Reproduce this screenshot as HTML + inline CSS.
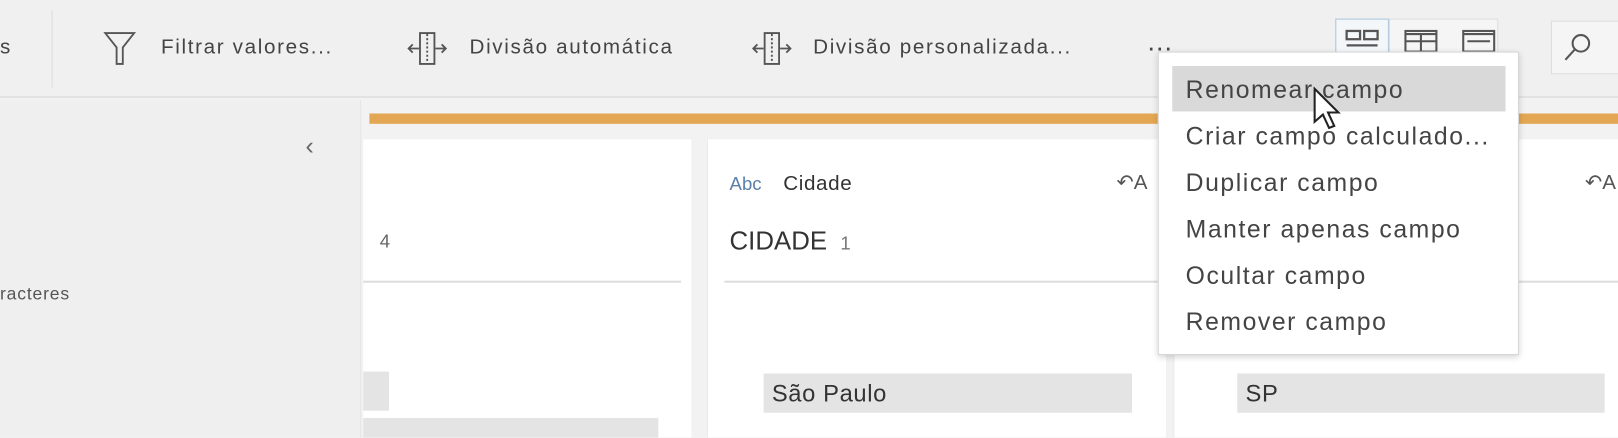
<!DOCTYPE html>
<html><head><meta charset="utf-8"><style>
*{margin:0;padding:0;box-sizing:border-box}
body{width:1618px;height:424px;overflow:hidden;background:#f2f2f2;font-family:"Liberation Sans",sans-serif;color:#333}
#w{position:relative;width:1568px;height:411px;transform:scale(1.0319);transform-origin:0 0}
.a{position:absolute;white-space:nowrap}
.tb{left:0;top:0;width:1568px;height:95px;background:#f0f0f0;border-bottom:2px solid #e2e2e2}
.tt{font-size:20px;color:#444;top:35px;letter-spacing:1.6px}
.card{background:#fff;top:135px;height:289px}
.chip{background:#e4e4e4;height:38px;font-size:23px;color:#333;padding:6px 8px;letter-spacing:0.6px}
.menu{left:1122px;top:50px;width:350px;height:294px;background:#fff;border:1px solid #d6d6d6;box-shadow:0 2px 6px rgba(0,0,0,.18)}
.mi{position:absolute;left:26px;font-size:24px;color:#444;letter-spacing:1.5px}
</style></head><body><div id="w">
<div class="a tb"></div>
<div class="a tt" style="left:0">s</div>
<div class="a" style="left:50px;top:10px;width:1px;height:75px;background:#ddd"></div>
<svg class="a" style="left:100px;top:30px" width="32" height="34" viewBox="0 0 32 34"><path d="M2 2H30L19 16V32H13V16Z" fill="none" stroke="#555" stroke-width="1.8"/></svg>
<div class="a tt" style="left:156px">Filtrar valores...</div>
<svg class="a" style="left:394px;top:30px" width="40" height="34" viewBox="0 0 40 34"><g fill="none" stroke="#555" stroke-width="1.8"><path d="M13 4V2H27V4M13 30V32H27V30M13 4V30M27 4V30"/><path d="M20 3V31" stroke-dasharray="2 2"/><path d="M12 17H2M6 13L2 17L6 21M28 17H38M34 13L38 17L34 21"/></g></svg>
<div class="a tt" style="left:455px">Divisão automática</div>
<svg class="a" style="left:728px;top:30px" width="40" height="34" viewBox="0 0 40 34"><g fill="none" stroke="#555" stroke-width="1.8"><path d="M13 4V2H27V4M13 30V32H27V30M13 4V30M27 4V30"/><path d="M20 3V31" stroke-dasharray="2 2"/><path d="M12 17H2M6 13L2 17L6 21M28 17H38M34 13L38 17L34 21"/></g></svg>
<div class="a tt" style="left:788px">Divisão personalizada...</div>
<div class="a" style="left:1112px;top:25px;font-size:26px;color:#444;letter-spacing:1px">...</div>
<div class="a" style="left:1294px;top:18px;width:52px;height:40px;border:1px solid #a9c4dc;background:#f4f7fa"></div>
<div class="a" style="left:1346px;top:18px;width:106px;height:40px;border:1px solid #ddd;background:#f5f5f5"></div>
<svg class="a" style="left:1303px;top:28px" width="36" height="22"><g fill="none" stroke="#555" stroke-width="2.2"><rect x="2" y="2" width="13" height="8"/><rect x="19" y="2" width="13" height="8"/><path d="M2 16H32"/></g></svg>
<svg class="a" style="left:1360px;top:28px" width="34" height="22"><g fill="none" stroke="#555" stroke-width="2"><rect x="2" y="2" width="30" height="20"/><path d="M2 5H32M2 12H32M17 5V22" /></g></svg>
<svg class="a" style="left:1416px;top:28px" width="34" height="22"><g fill="none" stroke="#555" stroke-width="2"><rect x="2" y="2" width="30" height="20"/><path d="M2 5H32M6 12H28"/></g></svg>
<div class="a" style="left:1503px;top:20px;width:120px;height:52px;border:1px solid #ddd;background:#f5f5f5"></div>
<svg class="a" style="left:1514px;top:30px" width="32" height="32"><g fill="none" stroke="#555" stroke-width="2"><circle cx="18" cy="12" r="8"/><path d="M12 18L3 28"/></g></svg>
<div class="a" style="left:0;top:97px;width:350px;height:327px;background:#efefef;border-right:1px solid #e4e4e4"></div>
<div class="a" style="left:296px;top:128px;font-size:24px;color:#666">&#8249;</div>
<div class="a" style="left:0;top:275px;font-size:17px;color:#555;letter-spacing:0.8px">racteres</div>
<div class="a" style="left:358px;top:110px;width:1260px;height:10px;background:#e3a753"></div>
<div class="a card" style="left:352px;width:318px"></div>
<div class="a card" style="left:685px;width:445px;border-left:1px solid #e8e8e8"></div>
<div class="a card" style="left:1137px;width:481px;border-left:1px solid #e8e8e8"></div>
<div class="a" style="left:368px;top:224px;font-size:18px;color:#666">4</div>
<div class="a" style="left:352px;top:272px;width:308px;height:2px;background:#ddd"></div>
<div class="a" style="left:702px;top:272px;width:420px;height:2px;background:#ddd"></div>
<div class="a" style="left:1150px;top:272px;width:468px;height:2px;background:#ddd"></div>
<div class="a" style="left:352px;top:360px;width:25px;height:38px;background:#e4e4e4"></div>
<div class="a" style="left:352px;top:405px;width:286px;height:19px;background:#e4e4e4"></div>
<div class="a" style="left:707px;top:168px;font-size:18px;color:#5a7fa8">Abc</div>
<div class="a" style="left:759px;top:167px;font-size:20px;color:#333;letter-spacing:0.6px">Cidade</div>
<div class="a" style="left:1082px;top:164px;font-size:20px;color:#555">&#8630;A</div>
<div class="a" style="left:1536px;top:164px;font-size:20px;color:#555">&#8630;A</div>
<div class="a" style="left:707px;top:220px;font-size:25px;color:#333">CIDADE <span style="font-size:18px;color:#777;margin-left:6px">1</span></div>
<div class="a chip" style="left:740px;top:362px;width:357px">São Paulo</div>
<div class="a chip" style="left:1199px;top:362px;width:356px">SP</div>
<div class="a menu">
<div class="a" style="left:13px;top:13px;width:323px;height:44px;background:#d9d9d9"></div>
<div class="mi" style="top:23px">Renomear campo</div>
<div class="mi" style="top:68px">Criar campo calculado...</div>
<div class="mi" style="top:113px">Duplicar campo</div>
<div class="mi" style="top:158px">Manter apenas campo</div>
<div class="mi" style="top:203px">Ocultar campo</div>
<div class="mi" style="top:248px">Remover campo</div>
</div>
<svg class="a" style="left:1272px;top:84px" width="30" height="44" viewBox="0 0 30 44"><path d="M2 2V34L10 27L16 40L21 38L15 25H25Z" fill="#fff" stroke="#222" stroke-width="2"/></svg>
</div></body></html>
